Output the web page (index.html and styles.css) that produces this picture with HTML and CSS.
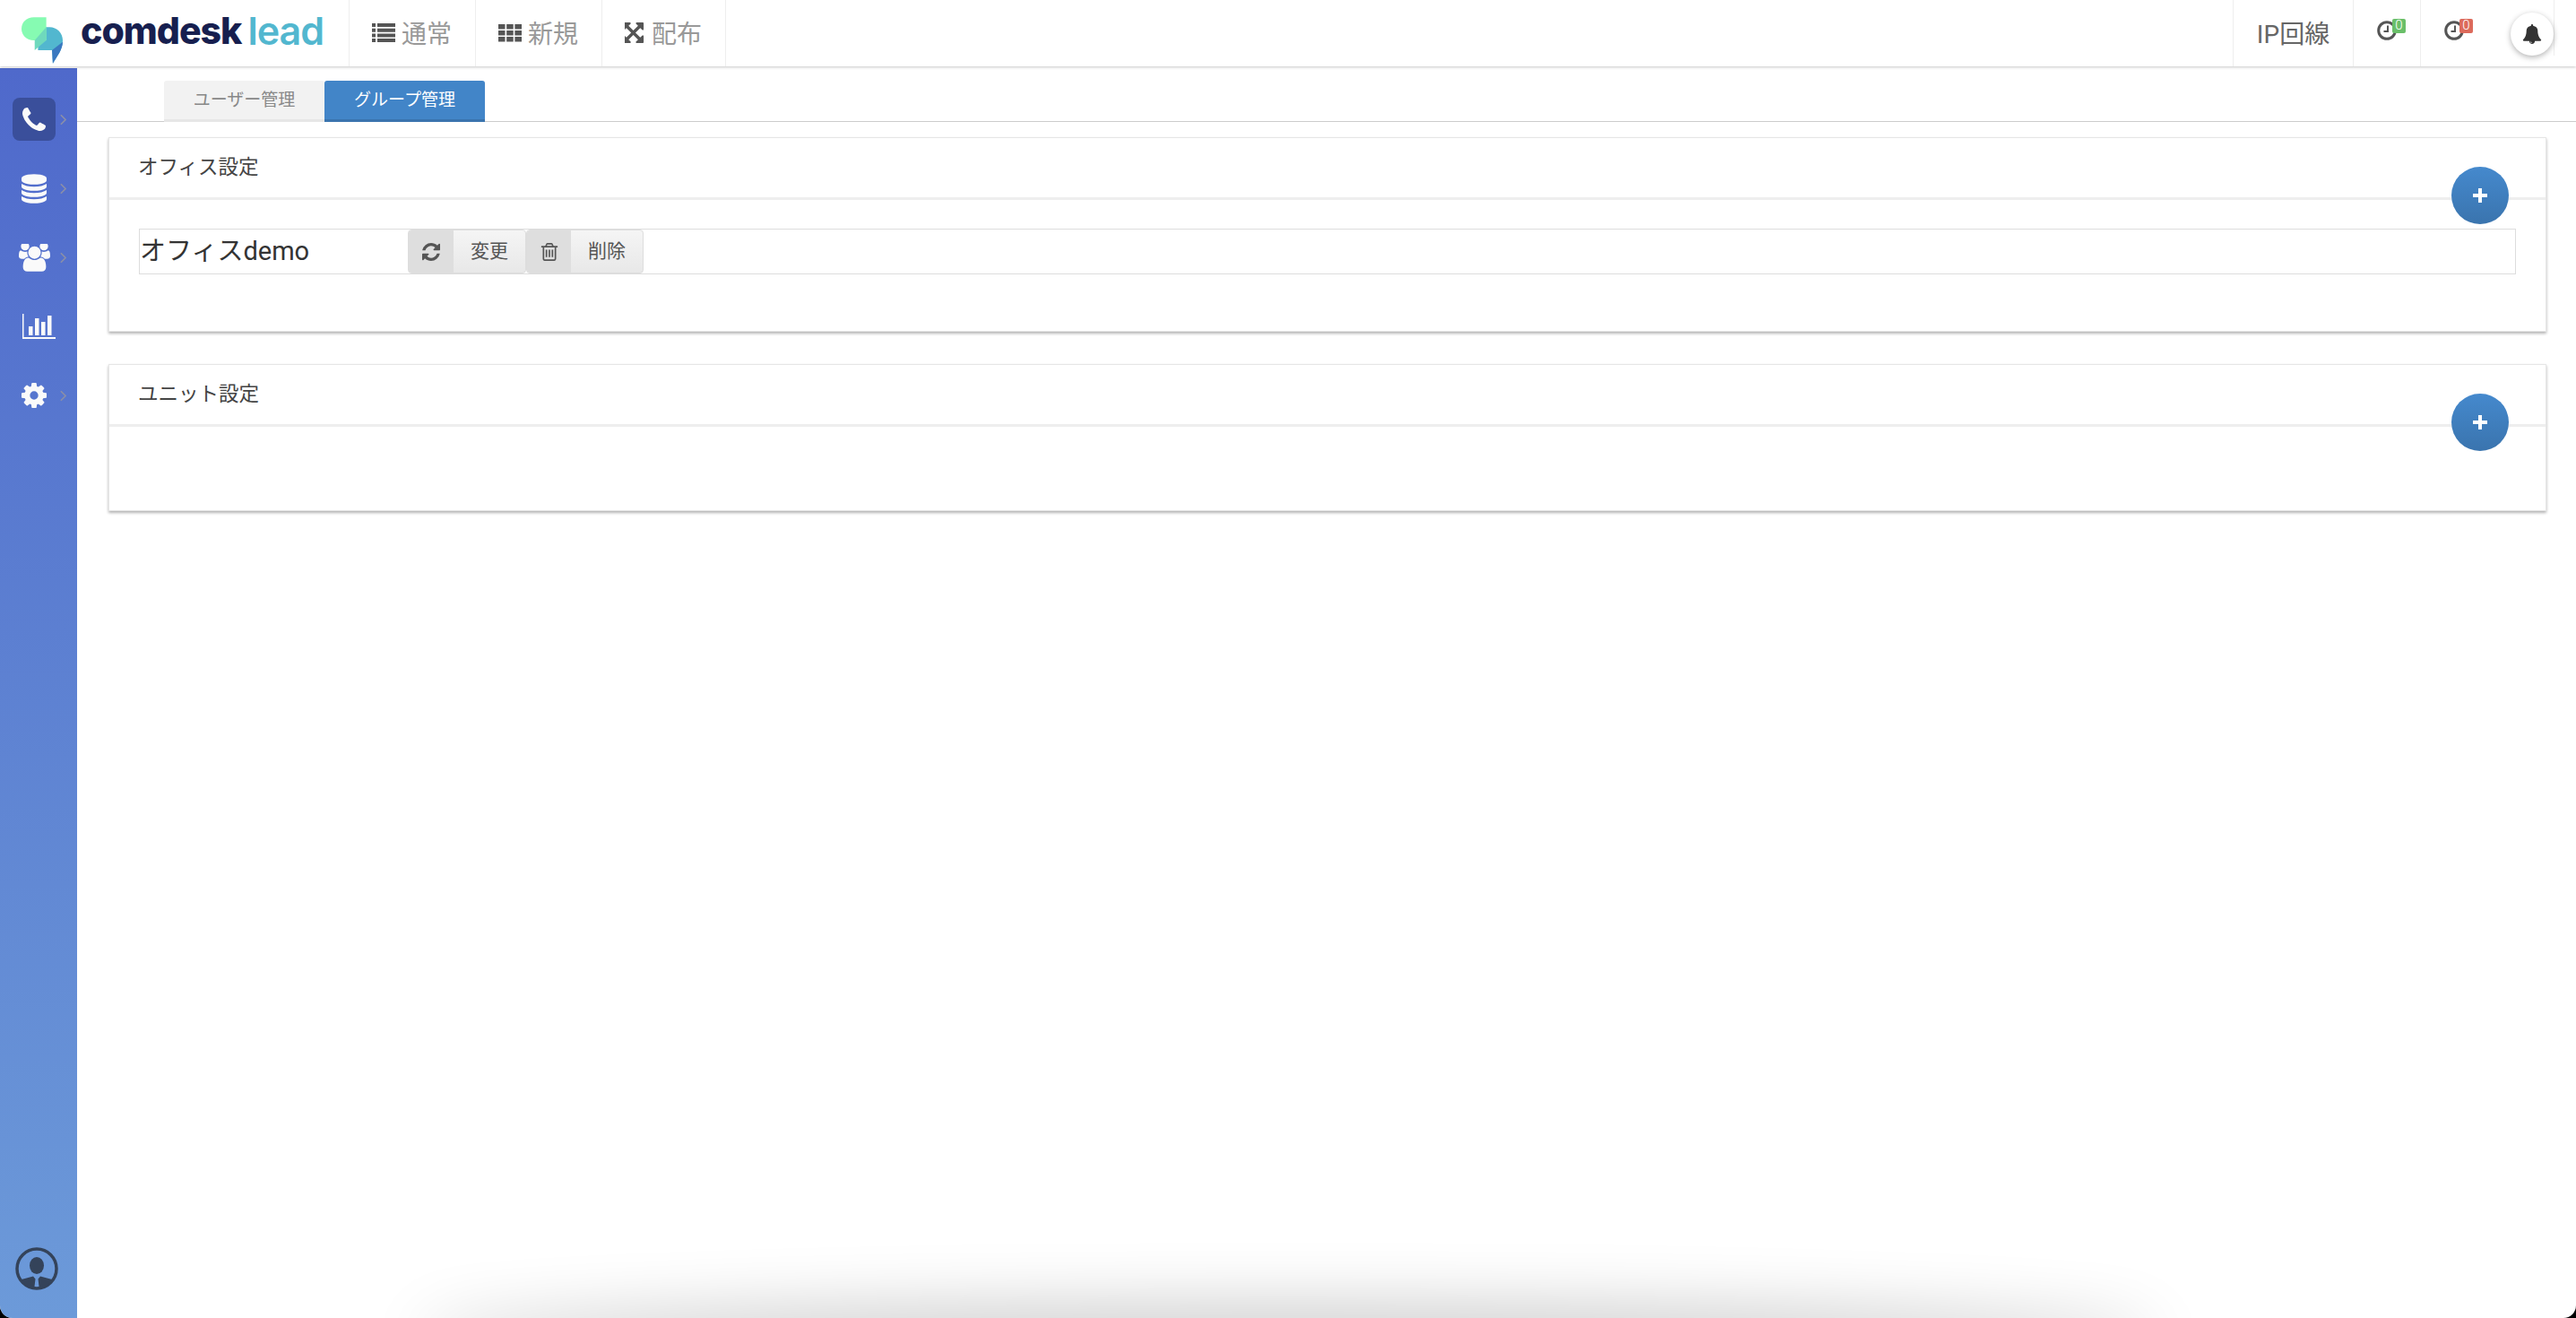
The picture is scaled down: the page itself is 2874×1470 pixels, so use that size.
FILE: index.html
```html
<!DOCTYPE html>
<html lang="ja">
<head>
  <meta charset="UTF-8">
  <title>comdesk lead</title>
  <link rel="stylesheet" href="styles.css">
</head>
<body>
  <div class="header">
    <div class="logo">
      <svg class="logo-mark" viewBox="0 0 50 56">
        <path fill="#52b7cf" d="M20 12h14c9 0 16 7 16 16 0 6-2 11-4 15l-8 13-1-16H20z"/>
        <path fill="#3a78c0" d="M50 30c0 5-2 9-4 13l-8 13-1-16z"/>
        <path fill="#86fbb2" d="M30 0v28H15C6 28 0 22 0 14S6 0 15 0z"/>
        <path fill="#6fd9bd" d="M16 28h14V12z M16 28v12l14-12z"/>
      </svg>
      <span class="logo-dark">comdesk</span><span class="logo-light">lead</span>
    </div>
    <div class="nav-item">
      <svg class="nav-icon" viewBox="0 0 26 21"><path d="M0 0h4v4H0zM6 0h20v4H6zM0 5.700h4v4H0zM6 5.700h20v4H6zM0 11.400h4v4H0zM6 11.400h20v4H6zM0 17h4v4H0zM6 17h20v4H6z"/></svg>
      <span>通常</span>
    </div>
    <div class="nav-item">
      <svg class="nav-icon" viewBox="0 0 26 21"><path d="M0 1h7.500v5.500H0zM9.200 1h7.500v5.500H9.200zM18.400 1H26v5.500h-7.600zM0 8h7.500v5.500H0zM9.200 8h7.500v5.500H9.200zM18.400 8H26v5.500h-7.600zM0 15h7.500v5.500H0zM9.200 15h7.500v5.500H9.200zM18.400 15H26v5.500h-7.600z"/></svg>
      <span>新規</span>
    </div>
    <div class="nav-item">
      <svg class="nav-icon nav-icon-expand" viewBox="128 128 1536 1536"><path d="M1283 541l-355 355 355 355 144-144q29-31 70-14 39 17 39 59v448q0 26-19 45t-45 19h-448q-42 0-59-40-17-39 14-69l144-144-355-355-355 355 144 144q31 30 14 69-17 40-59 40h-448q-26 0-45-19t-19-45v-448q0-42 40-59 39-17 69 14l144 144 355-355-355-355-144 144q-19 19-45 19-12 0-24-5-40-17-40-59v-448q0-26 19-45t45-19h448q42 0 59 40 17 39-14 69l-144 144 355 355 355-355-144-144q-31-30-14-69 17-40 59-40h448q26 0 45 19t19 45v448q0 42-39 59-13 5-25 5-26 0-45-19z"/></svg>
      <span>配布</span>
    </div>
    <div class="header-right">
      <div class="ip-item">IP回線</div>
      <div class="clock-item">
        <svg class="clock" viewBox="0 0 24 24"><circle cx="12" cy="12" r="9.300"/><path class="clock-hand" d="M13 6.500V13H8.500"/></svg>
        <span class="badge badge-green">0</span>
      </div>
      <div class="clock-item">
        <svg class="clock" viewBox="0 0 24 24"><circle cx="12" cy="12" r="9.300"/><path class="clock-hand" d="M13 6.500V13H8.500"/></svg>
        <span class="badge badge-red">0</span>
      </div>
      <div class="bell-item">
        <div class="bell-btn">
          <svg class="bell" viewBox="0 0 1792 1792"><path d="M912 1696q0-16-16-16-59 0-101.500-42.500t-42.500-101.500q0-16-16-16t-16 16q0 73 51.500 124.500t124.500 51.500q16 0 16-16zm816-288q0 52-38 90t-90 38h-448q0 106-75 181t-181 75-181-75-75-181h-448q-52 0-90-38t-38-90q50-42 91-88t85-119.500 74.500-158.500 50-206 19.500-260q0-152 117-282.500t307-158.500q-8-19-8-39 0-40 28-68t68-28 68 28 28 68q0 20-8 39 190 28 307 158.500t117 282.500q0 139 19.500 260t50 206 74.500 158.500 85 119.500 91 88z"/></svg>
        </div>
      </div>
    </div>
  </div>

  <div class="content">
    <div class="sidebar">
      <div class="side-item">
        <div class="side-icon active">
          <svg class="icon-phone" viewBox="192 128 1408 1408"><path d="M1600 1240q0 27-10 70.500t-21 68.500q-21 50-122 106-94 51-186 51-27 0-53-3.500t-57.500-12.500-47-14.500-55.500-20.500-49-18q-98-35-175-83-127-79-264-216t-216-264q-48-77-83-175-3-9-18-49t-20.500-55.500-14.500-47-12.500-57.500-3.500-53q0-92 51-186 56-101 106-122 25-11 68.500-21t70.500-10q14 0 21 3 18 6 53 76 11 19 30 54t35 63.500 31 53.500q3 4 17.500 25t21.500 35.500 7 28.500q0 20-28.500 50t-62 55-62 53-28.500 46q0 9 5 22.500t8.500 20.500 14 24 11.500 19q76 137 174 235t235 174q2 1 19 11.500t24 14 20.500 8.500 22.500 5q18 0 46-28.500t53-62 55-62 50-28.500q14 0 28.500 7t35.500 21.500 25 17.500q25 15 53.500 31t63.500 35 54 30q70 35 76 53 3 7 3 21z"/></svg>
        </div>
        <svg class="chevron" viewBox="0 0 8 14"><path d="M1 1l6 6-6 6"/></svg>
      </div>
      <div class="side-item">
        <div class="side-icon">
          <svg class="icon-db" viewBox="128 0 1536 1792"><path d="M896 768q237 0 443-43t325-127v170q0 69-103 128t-280 93.500-385 34.500-385-34.500-280-93.500-103-128v-170q119 84 325 127t443 43zm0 768q237 0 443-43t325-127v170q0 69-103 128t-280 93.500-385 34.500-385-34.500-280-93.500-103-128v-170q119 84 325 127t443 43zm0-384q237 0 443-43t325-127v170q0 69-103 128t-280 93.500-385 34.500-385-34.500-280-93.500-103-128v-170q119 84 325 127t443 43zm0-1152q208 0 385 34.500t280 93.500 103 128v128q0 69-103 128t-280 93.500-385 34.500-385-34.500-280-93.500-103-128v-128q0-69 103-128t280-93.500 385-34.500z"/></svg>
        </div>
        <svg class="chevron" viewBox="0 0 8 14"><path d="M1 1l6 6-6 6"/></svg>
      </div>
      <div class="side-item">
        <div class="side-icon">
          <svg class="icon-users" viewBox="0 128 1920 1664"><path d="M593 896q-162 5-265 128h-134q-82 0-138-40.500t-56-118.500q0-353 124-353 6 0 43.500 21t97.500 42.500 119 21.500q67 0 133-23-5 37-5 66 0 139 81 256zm1071 637q0 120-73 189.500t-194 69.500h-874q-121 0-194-69.500t-73-189.500q0-53 3.500-103.500t14-109 26.500-108.500 43-97.500 62-81 85.500-53.500 111.500-20q10 0 43 21.500t73 48 107 48 135 21.500 135-21.500 107-48 73-48 43-21.500q61 0 111.500 20t85.500 53.500 62 81 43 97.500 26.500 108.500 14 109 3.500 103.500zm-1024-1277q0 106-75 181t-181 75-181-75-75-181 75-181 181-75 181 75 75 181zm704 384q0 159-112.500 271.500t-271.500 112.500-271.500-112.500-112.500-271.500 112.500-271.500 271.500-112.500 271.500 112.500 112.500 271.500zm576 225q0 78-56 118.500t-138 40.500h-134q-103-123-265-128 81-117 81-256 0-29-5-66 66 23 133 23 59 0 119-21.500t97.500-42.500 43.500-21q124 0 124 353zm-128-609q0 106-75 181t-181 75-181-75-75-181 75-181 181-75 181 75 75 181z"/></svg>
        </div>
        <svg class="chevron" viewBox="0 0 8 14"><path d="M1 1l6 6-6 6"/></svg>
      </div>
      <div class="side-item">
        <div class="side-icon">
          <svg class="icon-chart" viewBox="0 0 37 28"><path d="M0 0h1.500v26H37v2H0zM7 14h4.500v10H7zM14 5h4.500v19H14zM21 9h4.500v15H21zM28 2h4.500v22H28z"/></svg>
        </div>
      </div>
      <div class="side-item">
        <div class="side-icon">
          <svg class="icon-cog" viewBox="128 128 1536 1536"><path d="M1152 896q0-106-75-181t-181-75-181 75-75 181 75 181 181 75 181-75 75-181zm512-109v222q0 12-8 23t-20 13l-185 28q-19 54-39 91 35 50 107 138 10 12 10 25t-9 23q-27 37-99 108t-94 71q-12 0-26-9l-138-108q-44 23-91 38-16 136-29 186-7 28-36 28h-222q-14 0-24.500-8.500t-11.500-21.500l-28-184q-49-16-90-37l-141 107q-10 9-25 9-14 0-25-11-126-114-165-168-7-10-7-23 0-12 8-23 15-21 51-66.500t54-70.500q-27-50-41-99l-183-27q-13-2-21-12.500t-8-23.500v-222q0-12 8-23t19-13l186-28q14-46 39-92-40-57-107-138-10-12-10-24 0-10 9-23 26-36 98.500-107.500t94.500-71.500q13 0 26 10l138 107q44-23 91-38 16-136 29-186 7-28 36-28h222q14 0 24.500 8.500t11.500 21.500l28 184q49 16 90 37l142-107q9-9 24-9 13 0 25 10 129 119 165 170 7 8 7 22 0 12-8 23-15 21-51 66.500t-54 70.500q26 50 41 98l183 28q13 2 21 12.500t8 23.500z"/></svg>
        </div>
        <svg class="chevron" viewBox="0 0 8 14"><path d="M1 1l6 6-6 6"/></svg>
      </div>
      <svg class="avatar" viewBox="0 0 48 48">
        <defs><clipPath id="avatarClip"><circle cx="24" cy="24" r="22"/></clipPath></defs>
        <circle class="avatar-ring" cx="24" cy="24" r="22"/>
        <ellipse class="avatar-fill" cx="24" cy="20.500" rx="8" ry="9.500"/>
        <path class="avatar-fill" clip-path="url(#avatarClip)" d="M7 36l13-3.500 2.500 3-1.500 12.500H7zM41 36l-13-3.500-2.500 3 1.500 12.500H41z"/>
      </svg>
    </div>

    <div class="main">
      <div class="tabs">
        <div class="tab">ユーザー管理</div>
        <div class="tab tab-active">グループ管理</div>
      </div>

      <div class="card card-office">
        <div class="card-header">オフィス設定</div>
        <div class="add-btn"><svg viewBox="0 0 16 16"><path d="M6 0h4v6h6v4h-6v6H6v-6H0V6h6z"/></svg></div>
        <div class="card-body">
          <div class="office-row">
            <div class="office-name">オフィスdemo</div>
            <div class="btn">
              <span class="btn-icon btn-icon-change">
                <svg viewBox="128 128 1536 1536"><path d="M1639 1056q0 5-1 7-64 268-268 434.500t-478 166.500q-146 0-282.500-55t-243.500-157l-129 129q-19 19-45 19t-45-19-19-45v-448q0-26 19-45t45-19h448q26 0 45 19t19 45-19 45l-137 137q71 66 161 102t187 36q134 0 250-65t186-179q11-17 53-117 8-23 30-23h192q13 0 22.500 9.500t9.500 22.500zm25-800v448q0 26-19 45t-45 19h-448q-26 0-45-19t-19-45 19-45l138-138q-148-137-349-137-134 0-250 65t-186 179q-11 17-53 117-8 23-30 23h-199q-13 0-22.500-9.500t-9.500-22.500v-7q65-268 270-434.500t480-166.500q146 0 284 55.500t245 156.500l130-129q19-19 45-19t45 19 19 45z"/></svg>
              </span>
              <span class="btn-text">変更</span>
            </div>
            <div class="btn">
              <span class="btn-icon btn-icon-delete">
                <svg viewBox="128 128 1536 1536"><path d="M704 736v576q0 14-9 23t-23 9h-64q-14 0-23-9t-9-23v-576q0-14 9-23t23-9h64q14 0 23 9t9 23zm256 0v576q0 14-9 23t-23 9h-64q-14 0-23-9t-9-23v-576q0-14 9-23t23-9h64q14 0 23 9t9 23zm256 0v576q0 14-9 23t-23 9h-64q-14 0-23-9t-9-23v-576q0-14 9-23t23-9h64q14 0 23 9t9 23zm128 724v-948h-896v948q0 22 7 40.500t14.500 27 10.500 8.500h832q3 0 10.500-8.500t14.500-27 7-40.500zm-672-1076h448l-48-117q-7-9-17-11h-317q-10 2-17 11zm928 32v64q0 14-9 23t-23 9h-96v948q0 83-47 143.500t-113 60.500h-832q-66 0-113-58.500t-47-141.500v-952h-96q-14 0-23-9t-9-23v-64q0-14 9-23t23-9h309l70-167q15-37 54-63t79-26h320q40 0 79 26t54 63l70 167h309q14 0 23 9t9 23z"/></svg>
              </span>
              <span class="btn-text">削除</span>
            </div>
          </div>
        </div>
      </div>

      <div class="card card-unit">
        <div class="card-header">ユニット設定</div>
        <div class="add-btn"><svg viewBox="0 0 16 16"><path d="M6 0h4v6h6v4h-6v6H6v-6H0V6h6z"/></svg></div>
      </div>
    </div>
  </div>

  <div class="bottom-glow"></div>
</body>
</html>
```

FILE: styles.css
```css
html {
  background: #000;
}

body {
  position: relative;
  display: flex;
  flex-direction: column;
  height: 1470px;
  margin: 0;
  overflow: hidden;
  background: #fff;
  border-radius: 0 0 14px 14px;
  font-family: "Roboto", "Noto Sans CJK JP", sans-serif;
  color: #333;
}

/* header */
.header {
  position: relative;
  z-index: 2;
  display: flex;
  flex-shrink: 0;
  height: 74px;
  margin-bottom: 2px;
  background: #fff;
  box-shadow: 0 1px 3px rgba(0, 0, 0, .22);
}

.logo {
  display: flex;
  align-items: center;
  width: 390px;
  padding-left: 24px;
  box-sizing: border-box;
  border-right: 1px solid #eee;
}

.logo-mark {
  flex-shrink: 0;
  width: 46px;
  height: 52px;
  margin-top: 16px;
  margin-right: 20px;
}

.logo-dark,
.logo-light {
  margin-bottom: 6px;
  font-family: "Inter", sans-serif;
  font-weight: 800;
  font-size: 41px;
  letter-spacing: -1px;
  color: #171f4f;
}

.logo-light {
  margin-left: 7px;
  font-size: 43px;
  font-weight: 600;
  color: #52b7cf;
}

.nav-item {
  display: flex;
  align-items: center;
  padding: 0 26px 2px 25px;
  border-right: 1px solid #eee;
  font-size: 28px;
  color: #999;
}

.nav-icon {
  flex-shrink: 0;
  width: 26px;
  height: 21px;
  margin-right: 7px;
  fill: #555;
}

.nav-icon-expand {
  width: 23px;
  height: 23px;
}

.header-right {
  display: flex;
  margin-left: auto;
  margin-right: 24px;
}

.ip-item {
  display: flex;
  align-items: center;
  justify-content: center;
  width: 133px;
  padding-bottom: 2px;
  border-left: 1px solid #eee;
  font-size: 28px;
  color: #666;
}

.clock-item {
  position: relative;
  display: flex;
  width: 75px;
  box-sizing: border-box;
  padding: 22px 0 0 25px;
  border-left: 1px solid #eee;
}

.clock {
  width: 24px;
  height: 24px;
  fill: none;
  stroke: #555;
  stroke-width: 3px;
}

.clock-hand {
  stroke-width: 2px;
}

.badge {
  position: absolute;
  top: 21px;
  left: 43px;
  width: 15px;
  height: 16px;
  border-radius: 2px;
  font-size: 15px;
  font-weight: 300;
  line-height: 15px;
  text-align: center;
  color: #fff;
}

.badge-green {
  background: #6abf69;
}

.badge-red {
  background: #dc6a5b;
}

.bell-item {
  width: 75px;
  height: 62px;
  box-sizing: border-box;
  padding: 14px 0 0 26px;
  border-right: 1px solid #eee;
}

.bell-btn {
  display: flex;
  align-items: center;
  justify-content: center;
  width: 48px;
  height: 48px;
  border-radius: 50%;
  background: #fff;
  box-shadow: 0 2px 6px rgba(0, 0, 0, .3);
}

.bell {
  width: 22px;
  height: 22px;
  fill: #333;
}

/* sidebar + main */
.content {
  display: flex;
  flex: 1;
}

.sidebar {
  display: flex;
  flex-direction: column;
  flex-shrink: 0;
  width: 86px;
  padding: 33px 0 14px 14px;
  box-sizing: border-box;
  background: linear-gradient(#4f69cb, #6c9ad9);
}

.side-item {
  display: flex;
  align-items: center;
  height: 48px;
  margin-bottom: 29px;
}

.side-icon {
  display: flex;
  align-items: center;
  justify-content: center;
  width: 48px;
  height: 48px;
  border-radius: 8px;
  fill: #fafafa;
}

.side-icon.active {
  background: #3a4f9b;
}

.icon-phone {
  width: 26px;
  height: 26px;
}

.icon-db {
  width: 28px;
  height: 33px;
}

.icon-users {
  width: 35px;
  height: 31px;
}

.icon-chart {
  width: 37px;
  height: 28px;
  margin-left: 11px;
}

.icon-cog {
  width: 28px;
  height: 28px;
}

.chevron {
  width: 7px;
  height: 13px;
  margin-left: 5px;
  fill: none;
  stroke: #8a8fa8;
  stroke-width: 2px;
}

.avatar {
  width: 48px;
  height: 48px;
  margin-top: auto;
  margin-left: 3px;
  margin-bottom: 17px;
}

.avatar-ring {
  fill: none;
  stroke: #34435a;
  stroke-width: 3.500px;
}

.avatar-fill {
  fill: #34435a;
}

.main {
  flex: 1;
  min-width: 0;
}

.tabs {
  display: flex;
  height: 60px;
  padding-top: 14px;
  padding-left: 97px;
  box-sizing: border-box;
  border-bottom: 1px solid #ccc;
}

.tab {
  width: 179px;
  height: 46px;
  box-sizing: border-box;
  border-bottom: 3px solid #e6e6e6;
  border-radius: 3px 3px 0 0;
  background: #f2f2f2;
  font-size: 19px;
  line-height: 44px;
  text-align: center;
  color: #888;
}

.tab-active {
  border-bottom-color: #3a74ae;
  background: #4285c8;
  color: #fff;
}

.card {
  position: relative;
  margin: 17px 33px 0 35px;
  box-sizing: border-box;
  border: 1px solid #e6e6e6;
  background: #fff;
  box-shadow: 0 2px 3px rgba(0, 0, 0, .3);
}

.card-office {
  height: 217px;
}

.card-unit {
  height: 164px;
  margin-top: 36px;
}

.card-header {
  height: 66px;
  padding-left: 32px;
  border-bottom: 3px solid #eee;
  font-size: 22.500px;
  line-height: 64px;
  color: #444;
}

.card-body {
  padding: 32px 33px 0;
}

.add-btn {
  position: absolute;
  top: 32px;
  right: 41px;
  display: flex;
  align-items: center;
  justify-content: center;
  width: 64px;
  height: 64px;
  border-radius: 50%;
  background: linear-gradient(#4589cd, #3a74ae);
}

.add-btn svg {
  width: 16px;
  height: 16px;
  fill: #fff;
}

.office-row {
  display: flex;
  align-items: center;
  height: 51px;
  box-sizing: border-box;
  border: 1px solid #ddd;
}

.office-name {
  width: 299px;
  margin-bottom: 2px;
  font-size: 29px;
  line-height: 46px;
  color: #333;
}

.btn {
  display: flex;
  height: 49px;
  box-sizing: border-box;
  border: 1px solid #ddd;
  border-radius: 4px;
  background: linear-gradient(#f5f5f5, #e8e8e8);
  overflow: hidden;
}

.btn-icon {
  display: flex;
  align-items: center;
  justify-content: center;
  background: #dedede;
}

.btn-icon svg {
  width: 20px;
  height: 20px;
  fill: #555;
}

.btn-icon-change {
  width: 50px;
}

.btn-icon-delete {
  width: 49px;
}

.btn-text {
  padding: 0 19px;
  font-size: 21px;
  line-height: 46px;
  color: #555;
}

.bottom-glow {
  position: absolute;
  left: 480px;
  right: 480px;
  bottom: -40px;
  height: 40px;
  border-radius: 50%;
  box-shadow: 0 0 70px 16px rgba(0, 0, 0, .2);
}
```
